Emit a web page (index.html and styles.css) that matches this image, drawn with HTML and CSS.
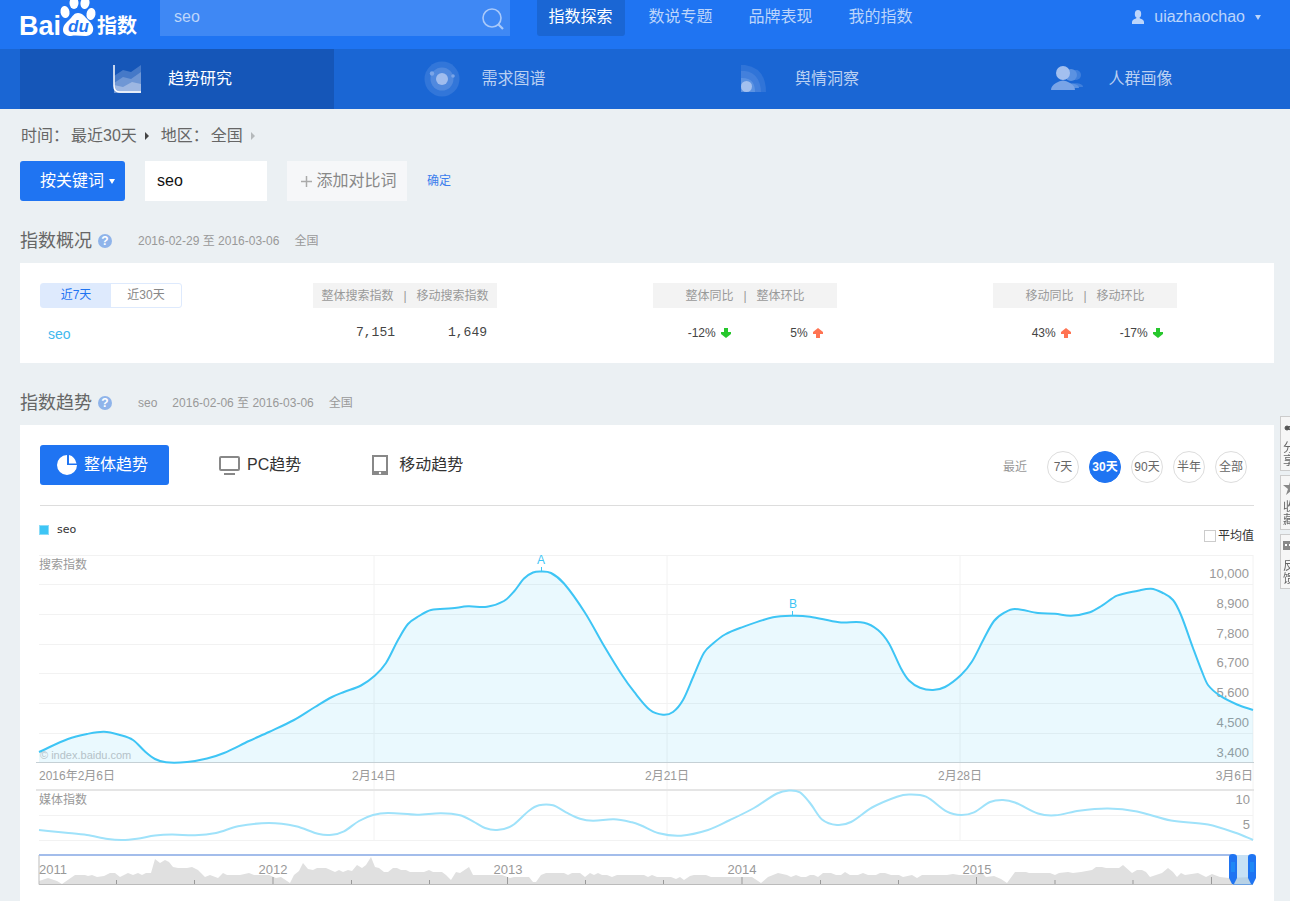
FILE: index.html
```html
<!DOCTYPE html>
<html lang="zh-CN">
<head>
<meta charset="utf-8">
<title>百度指数</title>
<link rel="stylesheet" href="styles.css">
</head>
<body>
<header class="topbar">
  <a class="logo" href="#" aria-label="百度指数">
    <svg width="120" height="40" viewBox="0 0 120 40">
      <g fill="#fff">
        <text class="logo-latin" x="-1" y="35">Bai</text>
        <ellipse cx="45" cy="12" rx="4.500" ry="6" transform="rotate(-10 45 12)"/>
        <ellipse cx="54" cy="3" rx="4.500" ry="6"/>
        <ellipse cx="65" cy="3" rx="4.500" ry="6" transform="rotate(10 65 3)"/>
        <ellipse cx="71" cy="14" rx="4.500" ry="6" transform="rotate(10 71 14)"/>
        <path d="M58 13c5 0 7 4 10 7 4 4 6 7 5 11-1 4-5 5-8 5-5 0-9-1-14 0-4 0-8-2-8-6 0-5 4-8 7-11 3-3 4-6 8-6z"/>
        <text class="logo-cjk" x="77" y="33">指数</text>
      </g>
      <text class="logo-du" x="48" y="32">du</text>
    </svg>
  </a>
  <form class="search">
    <input class="search-input" type="text" value="seo" aria-label="搜索关键词">
    <button class="search-button" type="button" aria-label="搜索">
      <svg width="22" height="22" viewBox="0 0 22 22" fill="none" stroke="#a9c9fa" stroke-width="1.6"><circle cx="10" cy="10" r="9"/><path d="M16 16l5 5" stroke-width="2.2"/></svg>
    </button>
  </form>
  <nav class="mainnav">
    <a class="mainnav-item is-active" href="#">指数探索</a>
    <a class="mainnav-item" href="#">数说专题</a>
    <a class="mainnav-item" href="#">品牌表现</a>
    <a class="mainnav-item" href="#">我的指数</a>
  </nav>
  <button class="user" type="button">
    <svg width="12" height="14" viewBox="0 0 12 14" fill="#bcd5fb"><ellipse cx="6" cy="4" rx="3.200" ry="4"/><path d="M0 14v-2c0-2 2-3 4-3.500l1-1.500h2l1 1.500c2 .5 4 1.500 4 3.500v2z"/></svg>
    <span>uiazhaochao</span>
    <i class="caret caret-light"></i>
  </button>
</header>

<nav class="subnav">
  <a class="subnav-item is-active" href="#">
    <svg width="32" height="36" viewBox="0 0 32 36">
      <path d="M4 15l9-6 8 2 10-7v28H4z" fill="#4579c8"/>
      <path d="M4 22l9-6 8 2 10-7v21H4z" fill="#6f97d5"/>
      <path d="M4 24l9 2 9-5 9 2v9H8l-4-4z" fill="#9db7e2"/>
      <path d="M4 4v21q0 6 6 6h21" fill="none" stroke="#fff" stroke-width="1.500"/>
    </svg>
    <span>趋势研究</span>
  </a>
  <a class="subnav-item" href="#">
    <svg width="36" height="36" viewBox="0 0 36 36">
      <circle cx="18" cy="18" r="17.500" fill="#3276d9"/><circle cx="18" cy="18" r="11.500" fill="#5089de"/>
      <circle cx="18" cy="18" r="6" fill="#a0bdee"/><circle cx="8" cy="12.500" r="2.200" fill="#7ba5e7"/><circle cx="29" cy="15" r="1.800" fill="#7ba5e7"/>
    </svg>
    <span>需求图谱</span>
  </a>
  <a class="subnav-item" href="#">
    <svg width="32" height="36" viewBox="0 0 32 36">
      <path d="M4 4h4q21 3 21 27H4z" fill="#3074d8"/><path d="M4 10h4q15 2 16 21H4z" fill="#4380dc"/>
      <path d="M4 17q14-1 14 14H4z" fill="#5b92e2"/><circle cx="9.500" cy="25.500" r="5.500" fill="#a3c0ef"/>
    </svg>
    <span>舆情洞察</span>
  </a>
  <a class="subnav-item" href="#">
    <svg width="34" height="36" viewBox="0 0 34 36">
      <circle cx="25" cy="14" r="5" fill="#3f7fdc"/><path d="M18 26c0-5 14-5 14 0z" fill="#3f7fdc"/>
      <circle cx="20" cy="14" r="6" fill="#5b92e2"/><path d="M12 27c0-6 16-6 16 0z" fill="#5b92e2"/>
      <path d="M0 29q0-4 5-7 7-5 14 0 5 3 5 7z" fill="#79a4e7"/><circle cx="12" cy="12" r="7" fill="#a3c0ef"/>
    </svg>
    <span>人群画像</span>
  </a>
</nav>

<main class="page">
  <div class="filters">
    <button class="filter" type="button"><span class="filter-name">时间：</span>最近30天<i class="arrow arrow-dark"></i></button>
    <button class="filter" type="button"><span class="filter-name">地区：</span>全国<i class="arrow"></i></button>
  </div>

  <form class="query">
    <button class="query-mode" type="button">按关键词<i class="caret"></i></button>
    <input class="query-input" type="text" value="seo" aria-label="关键词">
    <button class="query-add" type="button"><svg width="11" height="11" viewBox="0 0 11 11" stroke="#aaa" stroke-width="1.500"><path d="M5.500 0v11M0 5.500h11"/></svg>添加对比词</button>
    <a class="query-submit" href="#">确定</a>
  </form>

  <div class="heading">
    <h2 class="heading-title">指数概况</h2>
    <button class="help" type="button" aria-label="帮助">?</button>
    <span class="heading-meta">2016-02-29 至 2016-03-06</span>
    <span>全国</span>
  </div>
  <section class="card overview">
    <table class="stats">
      <tr>
        <td class="stats-name">
          <div class="segment">
            <button class="segment-item is-active" type="button">近7天</button>
            <button class="segment-item" type="button">近30天</button>
          </div>
        </td>
        <th class="stats-wide"><div class="stats-head"><span>整体搜索指数</span><span>|</span><span>移动搜索指数</span></div></th>
        <th class="stats-wide"><div class="stats-head"><span>整体同比</span><span>|</span><span>整体环比</span></div></th>
        <th><div class="stats-head"><span>移动同比</span><span>|</span><span>移动环比</span></div></th>
      </tr>
      <tr>
        <td class="stats-name"><a class="keyword" href="#">seo</a></td>
        <td><div class="stats-pair stats-pair-count"><span>7,151</span><span>1,649</span></div></td>
        <td><div class="stats-pair"><span>-12% <svg class="trend" viewBox="0 0 10 10"><path d="M3 0h4v4h3v2l-5 4-5-4V4h3z" fill="#27c72d"/></svg></span><span>5% <svg class="trend" viewBox="0 0 10 10"><path d="M3 10h4V6h3V4L5 0 0 4v2h3z" fill="#ff7352"/></svg></span></div></td>
        <td><div class="stats-pair"><span>43% <svg class="trend" viewBox="0 0 10 10"><path d="M3 10h4V6h3V4L5 0 0 4v2h3z" fill="#ff7352"/></svg></span><span>-17% <svg class="trend" viewBox="0 0 10 10"><path d="M3 0h4v4h3v2l-5 4-5-4V4h3z" fill="#27c72d"/></svg></span></div></td>
      </tr>
    </table>
  </section>

  <div class="heading">
    <h2 class="heading-title">指数趋势</h2>
    <button class="help" type="button" aria-label="帮助">?</button>
    <span class="heading-meta">seo</span>
    <span>2016-02-06 至 2016-03-06</span>
    <span>全国</span>
  </div>
  <section class="card trendcard">
    <div class="toolbar">
      <div class="tabs">
        <button class="tab is-active" type="button">
          <svg width="20" height="20" viewBox="0 0 20 20" fill="#fff"><path d="M10 0v10h10A10 10 0 1 1 10 0z"/><path d="M12 8.500V0q6 1.500 7.500 8.500z"/></svg>整体趋势</button>
        <button class="tab" type="button">
          <svg width="21" height="20" viewBox="0 0 21 20" fill="none" stroke="#888" stroke-width="2"><rect x="1" y="2" width="19" height="13" rx="1"/><path d="M5 19h11"/></svg>PC趋势</button>
        <button class="tab" type="button">
          <svg width="20" height="20" viewBox="0 0 20 20"><path d="M0 0h16v20H0z" fill="#888"/><path d="M2 2h12v14H2z" fill="#fff"/><circle cx="8" cy="18" r="1.200" fill="#fff"/></svg>移动趋势</button>
      </div>
      <div class="ranges">
        <span class="ranges-label">最近</span>
        <button class="range" type="button">7天</button>
        <button class="range is-active" type="button">30天</button>
        <button class="range" type="button">90天</button>
        <button class="range" type="button">半年</button>
        <button class="range" type="button">全部</button>
      </div>
    </div>
    <div class="legend">
      <span class="legend-item"><i class="legend-swatch"></i>seo</span>
      <label class="average"><input class="average-box" type="checkbox">平均值</label>
    </div>
    <div class="chart">
      <svg class="chart-svg" viewBox="36 550 1222 340" role="img" aria-label="搜索指数趋势图">
        <g class="grid">
          <path d="M39 555.500H1253M39 584.500H1253M39 614.500H1253M39 644.500H1253M39 673.500H1253M39 703.500H1253M39 733.500H1253"/>
          <path d="M374 555V840M667 555V840M960 555V840M1253 555V840"/>
          <path d="M39 815.500H1253M39 840.500H1253"/>
        </g>
        <g class="label label-scale" text-anchor="end">
          <text x="1249" y="578">10,000</text><text x="1249" y="608">8,900</text><text x="1249" y="638">7,800</text>
          <text x="1249" y="667">6,700</text><text x="1249" y="697">5,600</text><text x="1249" y="727">4,500</text>
          <text x="1249" y="757">3,400</text>
          <text x="1250" y="804">10</text><text x="1250" y="829">5</text>
        </g>
        <path id="search-area" class="area"/>
        <path class="axis" d="M36 762.500H1254"/>
        <path class="divider" d="M36 790H1254"/>
        <path id="search-line" class="line"/>
        <path id="media-line" class="line line-media"/>
        <path class="marker-stem" d="M541.500 567v5M792.500 611v5"/>
        <g class="marker" text-anchor="middle"><text x="541" y="564">A</text><text x="793" y="608">B</text></g>
        <g class="label">
          <text x="39" y="569">搜索指数</text>
          <text x="39" y="804">媒体指数</text>
          <text x="39" y="780">2016年2月6日</text>
          <text x="374" y="780" text-anchor="middle">2月14日</text>
          <text x="667" y="780" text-anchor="middle">2月21日</text>
          <text x="960" y="780" text-anchor="middle">2月28日</text>
          <text x="1253" y="780" text-anchor="end">3月6日</text>
        </g>
        <text class="copyright" x="40" y="759">© index.baidu.com</text>

        <path id="history" class="history"/>
        <path class="history-tick" d="M116.500 880v4M194.500 880v4M273 877v7M351.500 880v4M429.500 880v4M507.500 877v7M585.500 880v4M663.500 880v4M742 877v7M820.500 880v4M898.500 880v4M976.500 877v7M1055 880v4M1133 880v4M1211.500 877v7"/>
        <path class="history-frame" d="M39 855v29.500H1233"/>
        <g class="label label-scale">
          <text x="39" y="874">2011</text>
          <text x="273" y="874" text-anchor="middle">2012</text><text x="508" y="874" text-anchor="middle">2013</text>
          <text x="742" y="874" text-anchor="middle">2014</text><text x="977" y="874" text-anchor="middle">2015</text>
        </g>
        <path d="M39 855H1233" stroke="#a3bdeb" stroke-width="2"/>
        <rect x="1233" y="855" width="19" height="29" fill="#8fc4ec" fill-opacity=".5"/>
        <path d="M1233 884.500H1253" stroke="#6a9fe0"/>
        <g fill="#1f74f2">
          <path d="M1229 857q0-3 4-3t4 3v21l-3 6h-2l-3-6z"/>
          <path d="M1248 857q0-3 4-3t4 3v21l-3 6h-2l-3-6z"/>
        </g>
        <path d="M1231 862h4v10h-4zM1250 862h4v10h-4z" fill="#1e88f5"/>
      </svg>
    </div>
  </section>
</main>

<aside class="sidetools">
  <button class="sidetool" type="button"><svg width="16" height="16" viewBox="0 0 16 16" fill="#555" stroke="#555"><circle cx="4" cy="8" r="2"/><path d="M4 8l8-4M4 8l8 4" stroke-width="1.500"/></svg><span>分享</span></button>
  <button class="sidetool" type="button"><svg width="16" height="16" viewBox="0 0 16 16" fill="#888"><path d="M8 0l2 6h6l-5 4 2 6-5-4-5 4 2-6-5-4h6z"/></svg><span>收藏</span></button>
  <button class="sidetool" type="button"><svg width="16" height="16" viewBox="0 0 16 16"><path d="M0 3h16v9H0z" fill="#888"/><path d="M2 6h2v2H2zM6 6h2v2H6zM10 6h2v2h-2z" fill="#fff"/></svg><span>反馈</span></button>
</aside>
<script src="chart.js"></script>
</body>
</html>
```
FILE: styles.css
```css
* { box-sizing: border-box; }
body {
  margin: 0;
  background: #ebf0f3;
  color: #666;
  font: 12px/20px "Liberation Sans", "Noto Sans CJK SC", sans-serif;
}
a { color: inherit; text-decoration: none; }
button, input { margin: 0; padding: 0; border: 0; border-radius: 0; background: none; color: inherit; font: inherit; }
button { cursor: pointer; }
svg { flex: none; }
h2 { margin: 0; font-weight: 400; }

.topbar { display: flex; align-items: flex-start; height: 49px; padding: 0 29px 0 20px; background: #1f74f2; color: #bcd5fb; font-size: 16px; }
.logo { width: 140px; height: 40px; }
.logo-latin { font: bold 27px "Liberation Sans", sans-serif; }
.logo-cjk { font: bold 20px "Noto Sans CJK SC", sans-serif; }
.logo-du { font: italic bold 17px "Liberation Sans", sans-serif; fill: #1f74f2; }
.search { display: flex; align-items: flex-start; width: 350px; height: 36px; background: #3f88f4; }
.search-input { flex: 1; min-width: 0; height: 34px; padding: 0 14px; }
.search-button { display: flex; margin: 8px 6px 0 0; }
.mainnav { display: flex; gap: 12px; margin-left: 27px; }
.mainnav-item { width: 88px; height: 36px; padding-right: 1px; line-height: 34px; text-align: center; border-radius: 0 0 3px 3px; }
.mainnav-item.is-active { background: #1a66d4; color: #fff; }
.user { display: flex; align-items: center; gap: 10px; height: 34px; margin-left: auto; }
.caret { width: 0; border: solid transparent; border-width: 5px 3px 0; border-top-color: #fff; }
.caret-light { border-top-color: #bcd5fb; }

.subnav { display: grid; grid-template-columns: repeat(4, 1fr); height: 60px; padding: 0 16px 0 20px; background: #1a66d4; color: #bad0f2; font-size: 16px; }
.subnav-item { display: grid; grid-template-columns: 58px auto; justify-content: start; align-items: center; padding-left: 90px; }
.subnav-item.is-active { background: #1556b8; color: #fff; }

.page { padding: 0 16px 0 20px; }
.filters { display: flex; align-items: center; gap: 12px; height: 52px; padding: 1px 0 0 1px; font-size: 16px; }
.filter { display: flex; align-items: center; }
.filter-name { margin-right: 2px; }
.arrow { margin-left: 8px; border: solid transparent; border-width: 4px 0 4px 4px; border-left-color: #b5b9bb; }
.arrow-dark { border-left-color: #444; }
.query { display: flex; align-items: center; gap: 20px; height: 40px; font-size: 16px; }
.query-mode { display: flex; align-items: center; justify-content: flex-end; gap: 5px; width: 105px; height: 40px; padding-right: 10px; border-radius: 3px; background: #1f74f2; color: #fff; }
.query-input { width: 122px; height: 40px; padding: 0 12px; background: #fff; color: #111; }
.query-add { display: flex; align-items: center; justify-content: center; gap: 4px; width: 120px; height: 40px; padding-left: 4px; background: #f6f7f9; color: #888; }
.query-submit { color: #3b7ded; font-size: 12px; }

.heading { display: flex; align-items: center; gap: 15px; height: 62px; padding-top: 18px; color: #999; }
.heading-title { color: #666; font-size: 18px; line-height: 26px; }
.help { width: 14px; height: 14px; margin-left: -9px; border-radius: 50%; background: #8fb4ea; color: #fff; font-weight: bold; line-height: 14px; text-align: center; }
.heading-meta { margin-left: 11px; }
.card { background: #fff; }

.overview { height: 100px; padding: 20px 0 0 20px; }
.stats { width: 100%; border-collapse: collapse; table-layout: fixed; }
.stats th, .stats td { padding: 0; text-align: left; vertical-align: top; font-weight: 400; }
.stats .stats-name { width: 273px; }
.stats .stats-wide { width: 340px; }
.segment { display: grid; grid-template-columns: 1fr 1fr; width: 142px; height: 25px; border: 1px solid #deeafd; border-radius: 3px; }
.segment-item { color: #888; line-height: 23px; }
.segment-item.is-active { background: #deeafd; color: #1f74f2; }
.stats-head { display: flex; justify-content: center; gap: 10px; width: 184px; height: 25px; line-height: 26px; background: #f3f3f3; color: #999; }
.keyword { display: block; padding: 16px 8px 0; color: #3fb9ee; font-size: 14px; }
.stats-pair { display: grid; grid-template-columns: 92px 92px; padding-top: 15px; color: #444; text-align: right; }
.stats-pair span { padding-right: 14px; white-space: nowrap; }
.stats-pair-count span { padding-right: 10px; font: 13px/20px "Liberation Mono", monospace; }
.trend { width: 10px; height: 10px; margin-left: 2px; vertical-align: -1px; }

.trendcard { padding: 0 0 11px; }
.toolbar { display: flex; justify-content: space-between; align-items: center; margin: 0 20px; padding: 20px 0; border-bottom: 1px solid #ddd; }
.tabs { display: flex; gap: 33px; }
.tab { display: flex; align-items: center; gap: 7px; height: 40px; padding: 0 21px 0 17px; border-radius: 3px; color: #333; font-size: 16px; }
.tab.is-active { background: #1f74f2; color: #fff; }
.ranges { display: flex; align-items: center; gap: 10px; margin: 4px 7px 0 0; }
.ranges-label { margin-right: 10px; color: #999; }
.range { display: flex; align-items: center; justify-content: center; width: 32px; height: 32px; border: 1px solid #ddd; border-radius: 50%; white-space: nowrap; }
.range.is-active { border-color: #1f74f2; background: #1f74f2; color: #fff; font-weight: bold; }
.legend { display: flex; justify-content: space-between; align-items: flex-start; height: 44px; padding: 14px 20px 0 19px; color: #333; }
.legend-item { display: flex; align-items: center; gap: 8px; font-family: "DejaVu Sans", sans-serif; font-size: 11px; }
.legend-swatch { width: 10px; height: 10px; border: 1px solid #8bdcf8; background: #3ec5f5; }
.average { display: flex; align-items: center; gap: 2px; margin-top: 6px; }
.average-box { appearance: none; width: 12px; height: 12px; border: 1px solid #ccc; background: #fff; }
.chart { padding: 0 16px; }
.chart-svg { display: block; width: 100%; height: auto; fill: none; }
.grid { stroke: #f2f2f2; }
.axis { stroke: #c5d0d5; }
.divider { stroke: #e5e5e5; stroke-width: 2; }
.area { fill: #3ec5f5; fill-opacity: .11; }
.line { stroke: #3ec5f5; stroke-width: 2; }
.line-media { stroke: #9fe2fa; }
.marker { fill: #3ec5f5; font-size: 12px; }
.marker-stem { stroke: #3ec5f5; }
.label { fill: #999; font-size: 12px; }
.label-scale { font-size: 13px; }
.copyright { fill: #b5c2c8; font-size: 11px; }
.history { fill: #e0e0e0; }
.history-tick { stroke: #999; }
.history-frame { stroke: #bbb; }

.sidetools { position: fixed; top: 416px; right: 0; display: grid; gap: 4px; width: 10px; overflow: hidden; }
.sidetool { display: flex; flex-direction: column; align-items: flex-start; gap: 6px; width: 24px; height: 55px; padding: 3px 2px 0; border: 1px solid #ccc; background: #f6f6f6; color: #666; line-height: 13px; text-align: left; }
.sidetool span { width: 12px; }
```
FILE: chart.js
```javascript
const searchPoints = [[39,752],[68,739],[87,734],[104,731.7],[120,735],[133,740],[145,751.5],[155,759],[166,762.3],[187,762],[207,758.5],[224,753],[249,741],[269,732],[294,720],[315,707],[332,697],[344,692],[361,685.5],[375,675.5],[386,663],[398,640],[408,624],[419,616],[431,610],[452,608.3],[468,606.3],[487,606.7],[504,601],[514,591.5],[524,578.5],[533,572.5],[541,571.5],[551,573],[564,583.5],[585,612.7],[605,647.5],[622,675],[634,691.7],[650,710],[663,714.7],[673,712],[683,700],[694,675],[704,652.7],[713,643.5],[725,634.5],[740,628],[773,617.3],[793,615.7],[810,616.7],[839,622.3],[864,622.7],[878,630],[889,643.5],[901,668.5],[909,680.5],[920,687.7],[933,690],[945,687],[961,675],[972,661.5],[984,638.5],[994,621],[1005,612.3],[1015,609],[1038,613],[1055,613.7],[1071,615.7],[1090,612.3],[1102,605.7],[1117,595.7],[1138,590.7],[1151,588.7],[1162,592.5],[1173,600],[1181,615],[1193,648],[1202,671.7],[1208,685],[1220,695.7],[1237,704.5],[1253,710]];
const mediaPoints = [[39,830],[66,832.7],[87,835],[108,839],[122,840],[137,838.7],[155,835.5],[172,834.5],[195,835.3],[216,833],[238,826.3],[269,823],[296,826.3],[319,834],[332,834.7],[344,831.3],[359,821],[373,815],[388,813],[417,814.7],[441,813.3],[460,815.3],[473,821.3],[485,828],[497,830],[512,825.7],[529,810.7],[539,805.3],[553,805.3],[566,812.3],[580,818.7],[593,820.7],[614,819.3],[632,822.3],[640,825],[659,833.3],[681,835.7],[708,830],[729,820.5],[754,808],[777,793.5],[789,790.5],[800,792.3],[810,803],[822,819.5],[837,825],[851,822],[872,807.5],[897,796.7],[909,794.5],[926,796.7],[947,811.7],[961,815],[974,812.3],[990,802],[1003,800],[1015,802.5],[1038,813.5],[1055,815.3],[1079,810.7],[1108,808.5],[1137,811.5],[1171,820.5],[1208,824.5],[1237,833.3],[1253,840]];
const historyPoints = [[39,881],[48,878],[57,881],[62,884],[75,875],[85,875],[88,876],[92,875],[97,877],[104,876],[110,873],[115,873],[120,877],[128,873],[133,875],[138,873],[142,875],[146,873],[151,873],[155,859],[160,863],[165,860],[169,862],[173,867],[178,868],[187,868],[192,867],[198,870],[205,877],[210,875],[218,878],[223,873],[227,875],[240,875],[249,873],[254,875],[269,875],[276,878],[281,877],[290,883],[294,875],[299,871],[303,863],[308,869],[313,870],[317,868],[326,868],[335,872],[339,870],[343,872],[348,870],[352,871],[357,865],[362,868],[366,865],[371,857],[375,867],[379,868],[384,872],[388,872],[393,868],[397,868],[401,870],[406,870],[410,872],[424,872],[429,870],[433,872],[442,872],[446,875],[451,880],[456,872],[460,873],[469,867],[473,875],[502,875],[510,878],[514,877],[529,877],[533,882],[536,882],[541,875],[546,873],[564,873],[568,875],[572,873],[580,873],[585,877],[590,873],[594,875],[598,873],[602,875],[607,875],[612,877],[617,875],[644,875],[648,877],[652,875],[657,877],[671,877],[676,879],[680,877],[684,880],[690,876],[694,875],[706,875],[711,877],[752,877],[761,883],[768,877],[778,873],[787,875],[791,877],[796,875],[801,877],[806,877],[810,875],[814,875],[818,877],[823,873],[831,873],[836,875],[841,875],[845,872],[850,875],[858,875],[863,873],[868,875],[876,875],[880,873],[885,873],[891,875],[899,875],[903,877],[912,875],[917,878],[922,875],[947,875],[953,874],[959,875],[972,875],[982,873],[986,877],[994,876],[1001,879],[1007,883],[1015,872],[1026,872],[1029,873],[1050,873],[1055,875],[1059,873],[1068,872],[1073,873],[1081,872],[1092,870],[1096,867],[1102,867],[1106,868],[1119,868],[1123,865],[1132,873],[1137,870],[1142,870],[1146,872],[1150,877],[1162,873],[1168,868],[1173,872],[1177,877],[1181,873],[1185,875],[1198,873],[1206,877],[1212,874],[1220,877],[1229,878],[1253,877]];

// Cubic path through the points with slopes taken from the neighbouring points.
function spline(points) {
  const slope = points.map((p, i) => {
    const a = points[Math.max(i - 1, 0)];
    const b = points[Math.min(i + 1, points.length - 1)];
    return (b[1] - a[1]) / (b[0] - a[0]);
  });
  let d = `M${points[0]}`;
  for (let i = 1; i < points.length; i++) {
    const [x0, y0] = points[i - 1];
    const [x1, y1] = points[i];
    const h = (x1 - x0) / 3;
    d += `C${x0 + h} ${y0 + slope[i - 1] * h} ${x1 - h} ${y1 - slope[i] * h} ${x1} ${y1}`;
  }
  return d;
}

const draw = (id, d) => document.getElementById(id).setAttribute("d", d);
draw("search-line", spline(searchPoints));
draw("search-area", `${spline(searchPoints)}V762H39Z`);
draw("media-line", spline(mediaPoints));
draw("history", `M39 884L${historyPoints.join("L")}V884Z`);
```
